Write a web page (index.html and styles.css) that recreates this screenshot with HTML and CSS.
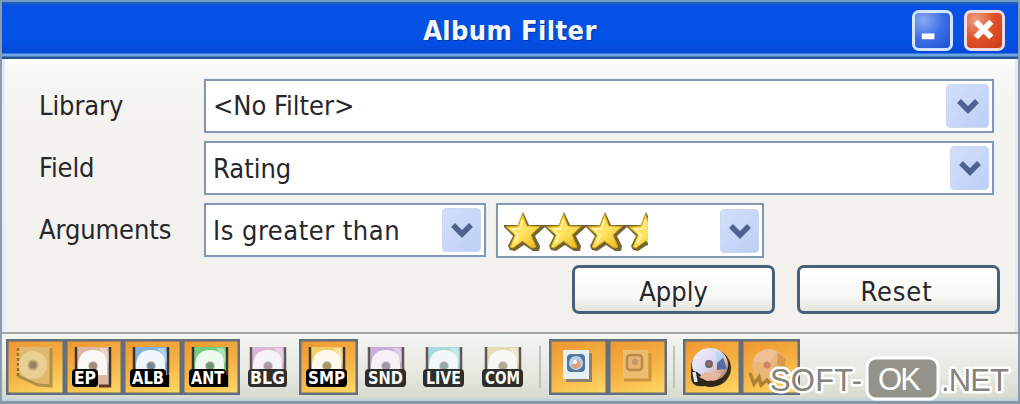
FILE: index.html
```html
<!DOCTYPE html>
<html lang="en">
<head>
    <meta charset="UTF-8">
    <meta name="viewport" content="width=device-width, initial-scale=1.0">
    <title>Album Filter</title>
    <link rel="stylesheet" href="styles.css">
</head>
<body>
    <!-- shared shapes -->
    <svg class="defs" width="0" height="0">
        <defs>
            <linearGradient id="gold" x1="0" y1="0" x2="1" y2="1">
                <stop offset="0" stop-color="#efb51c"/>
                <stop offset="0.5" stop-color="#ffe766"/>
                <stop offset="1" stop-color="#eeb010"/>
            </linearGradient>
            <linearGradient id="cd" x1="0" y1="0" x2="1" y2="1">
                <stop offset="0" stop-color="#f4f4ff"/>
                <stop offset="0.5" stop-color="#d9d8f0"/>
                <stop offset="0.7" stop-color="#dcb4a8"/>
                <stop offset="1" stop-color="#8a5030"/>
            </linearGradient>
            <symbol id="chevron" viewBox="0 0 24 16">
                <path d="M3 3 L12 12 L21 3" fill="none" stroke="#4f628f" stroke-width="5.5"/>
            </symbol>
            <symbol id="star" viewBox="0 0 44 44">
                <path d="M21 3 L27 16 L43 16 L43 18 L33 27 L38 37 L37 42 L31 42 L22 36 L13 42 L8 41 L6 37 L11 27 L2 18 L2 16 L16 16 Z" fill="#71662f"/>
                <path d="M20.500 5 L25 17 L38 17.500 L29 26 L34 38 L30 39 L20.500 32 L11 39 L8 38 L13 26 L4 18 L16 17 Z" fill="url(#gold)" stroke="#d3a51e" stroke-width="1"/>
                <path d="M20.500 11 L18 20 L10 20 L16 26 L13 34" fill="none" stroke="#fff3a0" stroke-width="2"/>
            </symbol>
            <symbol id="disc" viewBox="0 0 58 55">
                <rect x="10" y="8" width="36" height="40" fill="currentColor"/>
                <path d="M13 36 V26 Q14 11 28 11 Q43 11 42 28 V36 Z" fill="#fff" opacity="0.88"/>
                <path d="M34 9 H41 L45 16 V27 Z" fill="#fff" opacity="0.4"/>
                <circle cx="28" cy="27" r="5" fill="#6b6660" opacity="0.3"/>
                <circle cx="28" cy="27" r="3.800" fill="#5c5650" opacity="0.85"/>
                <circle cx="28" cy="27" r="3.800" fill="currentColor" opacity="0.45"/>
                <path d="M11 8 V46 M45 8 V48" fill="none" stroke="#3a3430" stroke-width="2.500"/>
            </symbol>
        </defs>
    </svg>

    <div class="window">
        <div class="titlebar">
            <span class="title">Album Filter</span>
            <div class="controls">
                <button class="control minimize"><svg viewBox="0 0 36 36"><rect x="7" y="21" width="13" height="6" fill="#fff"/></svg></button>
                <button class="control close"><svg viewBox="0 0 36 36"><path d="M9 9 L25 25 M25 9 L9 25" stroke="#fff" stroke-width="6"/></svg></button>
            </div>
        </div>

        <div class="form">
            <div class="row">
                <label>Library</label>
                <div class="select wide"><span>&lt;No Filter&gt;</span><i class="arrow big"><svg><use href="#chevron"/></svg></i></div>
            </div>
            <div class="row">
                <label>Field</label>
                <div class="select wide low"><span>Rating</span><i class="arrow"><svg><use href="#chevron"/></svg></i></div>
            </div>
            <div class="row">
                <label>Arguments</label>
                <div class="select operator low"><span>Is greater than</span><i class="arrow"><svg><use href="#chevron"/></svg></i></div>
                <div class="select rating">
                    <svg class="stars" viewBox="0 0 146 44">
                        <use href="#star" x="0" y="0" width="44" height="44"/>
                        <use href="#star" x="41" y="0" width="44" height="44"/>
                        <use href="#star" x="82" y="0" width="44" height="44"/>
                        <use href="#star" x="123" y="0" width="44" height="44"/>
                    </svg>
                    <i class="arrow"><svg><use href="#chevron"/></svg></i>
                </div>
            </div>
            <div class="actions">
                <button class="button">Apply</button>
                <button class="button reset">Reset</button>
            </div>
        </div>

        <div class="toolbar">
            <div class="tool on">
                <svg viewBox="0 0 58 55">
                    <path d="M11 8 H45 V47 L32 46 L11 37 Z" fill="#dfb96f"/>
                    <path d="M12 37 L32 46 L45 47 V9" fill="none" stroke="#b08f49" stroke-width="3"/>
                    <path d="M12 9 V37" fill="none" stroke="#8f7433" stroke-width="2.500" stroke-dasharray="3 2"/>
                    <circle cx="27" cy="26" r="14" fill="#e9cf91"/>
                    <circle cx="27" cy="26" r="5.500" fill="#c5aa72"/>
                    <circle cx="27" cy="26" r="3.500" fill="#8e8060"/>
                </svg>
            </div>
            <div class="tool on ep">
                <svg viewBox="0 0 58 55">
                    <use href="#disc"/>
                    <path d="M34 47 H46" stroke="#5a3a22" stroke-width="3"/>
                    <rect x="7" y="30" width="26" height="18" rx="4"/>
                    <text x="9" y="45" textLength="22" lengthAdjust="spacingAndGlyphs">EP</text>
                </svg>
            </div>
            <div class="tool on alb">
                <svg viewBox="0 0 58 55">
                    <use href="#disc"/>
                    <rect x="7" y="30" width="36" height="18" rx="4"/>
                    <rect x="32" y="36" width="14" height="12"/>
                    <text x="9" y="45" textLength="32" lengthAdjust="spacingAndGlyphs">ALB</text>
                </svg>
            </div>
            <div class="tool on ant">
                <svg viewBox="0 0 58 55">
                    <use href="#disc"/>
                    <rect x="7" y="30" width="37" height="18" rx="4"/>
                    <rect x="32" y="36" width="14" height="12"/>
                    <text x="9" y="45" textLength="33" lengthAdjust="spacingAndGlyphs">ANT</text>
                </svg>
            </div>
            <div class="tool off blg">
                <svg viewBox="0 0 58 55">
                    <use href="#disc"/>
                    <rect x="8" y="30" width="39" height="18" rx="4"/>
                    <text x="10" y="45" textLength="35" lengthAdjust="spacingAndGlyphs">BLG</text>
                </svg>
            </div>
            <div class="tool on smp">
                <svg viewBox="0 0 58 55">
                    <use href="#disc"/>
                    <rect x="7" y="30" width="41" height="18" rx="4"/>
                    <text x="9" y="45" textLength="37" lengthAdjust="spacingAndGlyphs">SMP</text>
                </svg>
            </div>
            <div class="tool off snd">
                <svg viewBox="0 0 58 55">
                    <use href="#disc"/>
                    <rect x="7" y="30" width="41" height="18" rx="4"/>
                    <text x="10" y="45" textLength="35" lengthAdjust="spacingAndGlyphs">SND</text>
                </svg>
            </div>
            <div class="tool off live">
                <svg viewBox="0 0 58 55">
                    <use href="#disc"/>
                    <rect x="7" y="30" width="41" height="18" rx="4"/>
                    <text x="10" y="45" textLength="35" lengthAdjust="spacingAndGlyphs">LIVE</text>
                </svg>
            </div>
            <div class="tool off com">
                <svg viewBox="0 0 58 55">
                    <use href="#disc"/>
                    <rect x="7" y="30" width="41" height="18" rx="4"/>
                    <text x="10" y="45" textLength="35" lengthAdjust="spacingAndGlyphs">COM</text>
                </svg>
            </div>
            <div class="separator"></div>
            <div class="tool on">
                <svg viewBox="0 0 58 55">
                    <rect x="17" y="14" width="26" height="29" fill="#8c8170"/>
                    <rect x="14" y="11" width="26" height="29" fill="#e6f1f5"/>
                    <rect x="18" y="15" width="18" height="18" rx="4" fill="#537899"/>
                    <circle cx="27" cy="24" r="7" fill="#b7cfe9"/>
                    <path d="M22 27 L29 20 L32 27 L26 30 Z" fill="#e09a76"/>
                    <circle cx="26" cy="23" r="2" fill="#fff"/>
                </svg>
            </div>
            <div class="tool on">
                <svg viewBox="0 0 58 55">
                    <path d="M16 41 H42 V14" fill="none" stroke="#c9963f" stroke-width="3"/>
                    <rect x="15" y="11" width="25" height="28" fill="#edbd71"/>
                    <rect x="19" y="16" width="15" height="15" rx="3" fill="#e9b272" stroke="#b98a4a" stroke-width="2.500"/>
                    <circle cx="27" cy="23" r="3" fill="#c49566"/>
                </svg>
            </div>
            <div class="separator"></div>
            <div class="tool on">
                <svg viewBox="0 0 58 55">
                    <ellipse cx="28" cy="29" rx="20" ry="19" fill="#35301d"/>
                    <ellipse cx="27" cy="26" rx="18" ry="17" fill="url(#cd)"/>
                    <path d="M34 22 L40 18 L44 30 L34 31 Z" fill="#526cab"/>
                    <path d="M33 12 L42 17 L34 24 Z" fill="#b8d4f3"/>
                    <path d="M8 31 L14 33 L22 39 L30 42 L42 38 Q36 50 22 47 Q8 49 8 38 Z" fill="#30271c"/>
                    <path d="M16 38 L22 33 L29 35 L39 34 L34 41 L24 42 Z" fill="#e6b79b"/>
                    <path d="M11 33 L13 43" stroke="#dce8ed" stroke-width="3.500"/>
                    <circle cx="26" cy="25" r="4" fill="#726373"/>
                    <circle cx="26" cy="25" r="1.500" fill="#b17354"/>
                </svg>
            </div>
            <div class="tool on">
                <svg viewBox="0 0 58 55">
                    <ellipse cx="28" cy="26" rx="17" ry="16" fill="#eab679"/>
                    <path d="M12 22 A16 15 0 0 1 36 13 L28 25 Z" fill="#efc097"/>
                    <path d="M37 14 L45 20 L43 31 L36 26 Z" fill="#d39a50"/>
                    <path d="M9 34 L13 45 L18 38 L20 46 L26 41 L30 46" fill="none" stroke="#ad8038" stroke-width="3.500"/>
                    <circle cx="26" cy="26" r="3.500" fill="#cb8767"/>
                </svg>
            </div>
        </div>
    </div>

    <div class="watermark">
        <svg viewBox="0 0 260 54">
            <text class="outlined" x="10" y="41" textLength="92">SOFT-</text>
            <rect x="107" y="8" width="71" height="41" rx="9"/>
            <text class="ok" x="118" y="40" textLength="43">OK</text>
            <text class="outlined" x="181" y="41" textLength="68">.NET</text>
        </svg>
    </div>
</body>
</html>
```
FILE: styles.css
```css
* {
    margin: 0;
    padding: 0;
    box-sizing: border-box;
}

body {
    width: 1020px;
    height: 404px;
    overflow: hidden;
    position: relative;
    font-family: 'DejaVu Sans Condensed', 'DejaVu Sans', sans-serif;
    font-stretch: condensed;
    font-size: 27px;
    color: #26262b;
}

.defs {
    position: absolute;
}

svg {
    display: block;
}

.window {
    width: 1020px;
    height: 404px;
    display: flex;
    flex-direction: column;
    background: #f4f3ee;
    border: 2px solid #8b9bb0;
    border-top-color: #6f9fc6;
    border-bottom: 3px solid #8798a6;
}

.titlebar {
    height: 57px;
    flex: none;
    display: flex;
    align-items: center;
    justify-content: center;
    position: relative;
    background: linear-gradient(#2860ab 0, #0551e5 4px, #0352e6 36px, #0448d8 51px, #6ca5e3 52px, #6ca5e3 54px, #245794 55px);
}

.title {
    color: #f5f9ff;
    font-size: 27px;
    font-weight: bold;
    line-height: 50px;
    letter-spacing: 0.4px;
    text-shadow: 1px 1px 1px #0a35a0;
}

.controls {
    position: absolute;
    right: 13px;
    top: 8px;
    display: flex;
    gap: 11px;
}

.control {
    width: 41px;
    height: 41px;
    border: 3px solid #d5e4ff;
    border-radius: 7px;
}

.control svg {
    width: 35px;
    height: 35px;
}

.minimize {
    background: radial-gradient(circle at 25% 20%, #8aa8f0, #3c6fe6 50%, #1f50cd);
}

.close {
    background: radial-gradient(circle at 25% 20%, #ee9d80, #df5028 50%, #c83d12);
    border-color: #f2dce4;
}

.form {
    height: 273px;
    flex: none;
    padding: 20px 21px 0 34px;
    background: linear-gradient(#fcffff, #f7f8f6 12px, #f4f3ef 50px, #f2f1ed);
    border-left: 3px solid #e4eafa;
    border-right: 3px solid #dceafa;
}

.row {
    display: flex;
    height: 54px;
    margin-bottom: 8px;
}

.row label {
    width: 165px;
    flex: none;
    line-height: 53px;
    letter-spacing: -0.1px;
}

.select {
    height: 54px;
    flex: none;
    display: flex;
    align-items: center;
    justify-content: space-between;
    background: #fefefe;
    border: 2px solid #8499ad;
    outline: 1px solid #e6f0f8;
    padding: 0 3px 0 7px;
}

.select span {
    line-height: 48px;
    padding-bottom: 1px;
}

.select.low span {
    padding: 2px 0 0;
}

.wide {
    width: 790px;
}

.operator {
    width: 282px;
}

.operator span {
    letter-spacing: 0.5px;
}

.rating {
    width: 268px;
    margin-left: 10px;
    padding-left: 4px;
    height: 55px;
}

.stars {
    width: 146px;
    height: 44px;
}

.arrow {
    width: 39px;
    height: 44px;
    display: flex;
    align-items: center;
    justify-content: center;
    border-radius: 4px;
    border: 1px solid #cbd8f0;
    background: linear-gradient(135deg, #d3dffa, #bdcff7);
}

.arrow.big {
    width: 43px;
}

.arrow svg {
    width: 24px;
    height: 16px;
}

.actions {
    display: flex;
    justify-content: flex-end;
    gap: 22px;
    margin: 0 -6px 0 0;
}

.button {
    width: 203px;
    height: 49px;
    border: 3px solid #48617a;
    border-radius: 7px;
    background: linear-gradient(#ffffff, #f8f8f5 65%, #e2e3dc);
    font: inherit;
    color: #26262b;
    padding-top: 3px;
}

.reset {
    letter-spacing: 0.9px;
    padding-right: 4px;
}

.toolbar {
    flex: 1;
    display: flex;
    padding: 5px 0 0 4px;
    border-top: 2px solid #a6a6a1;
    background: linear-gradient(#f3f5f3, #e9e9e2 35px, #d9dcd0 62px, #bcd0df);
}

.tool {
    width: 58.6px;
    height: 56px;
    flex: none;
}

.tool svg {
    width: 58px;
    height: 55px;
}

.on {
    background: linear-gradient(160deg, #ee9430, #f5b143 50%, #ffdc68);
    box-shadow: inset 0 0 0 2.5px #626f7f;
}

.tool text {
    fill: #fff;
    font-size: 17px;
    font-weight: bold;
}

.off svg {
    opacity: 0.8;
}

.ep { color: #dcb8a3; }
.alb { color: #84b2dc; }
.ant { color: #72cf80; }
.blg { color: #d8a8d4; }
.smp { color: #f0ce65; }
.snd { color: #c29dd4; }
.live { color: #98d3dc; }
.com { color: #ded9ac; }

.separator {
    width: 2px;
    height: 42px;
    margin: 7px 8px 0 6px;
    flex: none;
    background: #bfc0bc;
}

/* site mark over the bottom right corner */
.watermark {
    position: absolute;
    right: 0;
    bottom: 0;
    width: 260px;
    height: 54px;
    font-family: 'Liberation Sans', Arial, sans-serif;
    font-size: 31px;
    font-stretch: normal;
}

.watermark rect {
    fill: #93938b;
    stroke: #fff;
    stroke-width: 3px;
}

.outlined {
    fill: #85837b;
    stroke: #fff;
    stroke-width: 5px;
    stroke-linejoin: round;
    paint-order: stroke;
}

.ok {
    fill: #fff;
}
```
